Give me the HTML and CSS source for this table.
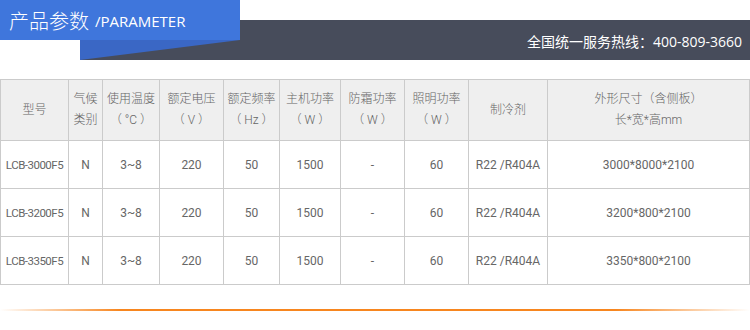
FILE: index.html
```html
<!DOCTYPE html>
<html lang="zh">
<head>
<meta charset="utf-8">
<title>产品参数</title>
<link rel="stylesheet" href="styles.css">
</head>
<body>
<div class="page">
  <header class="head">
    <div class="title"><span class="title-cn">产品参数</span><span class="title-en">/PARAMETER</span></div>
    <div class="bar"><span class="hotline">全国统一服务热线：400-809-3660</span></div>
  </header>
  <table class="params">
    <colgroup>
      <col style="width:68px"><col style="width:34px"><col style="width:57px"><col style="width:64px"><col style="width:56px"><col style="width:61px"><col style="width:64px"><col style="width:64px"><col style="width:79px"><col>
    </colgroup>
    <thead>
      <tr>
        <th>型号</th>
        <th>气候<br>类别</th>
        <th>使用温度<br>（ °C ）</th>
        <th>额定电压<br>（ V ）</th>
        <th>额定频率<br>（ Hz ）</th>
        <th>主机功率<br>（ W ）</th>
        <th>防霜功率<br>（ W ）</th>
        <th>照明功率<br>（ W ）</th>
        <th>制冷剂</th>
        <th>外形尺寸（含侧板）<br>长*宽*高mm</th>
      </tr>
    </thead>
    <tbody>
      <tr><td class="model">LCB-3000F5</td><td>N</td><td>3~8</td><td>220</td><td>50</td><td>1500</td><td>-</td><td>60</td><td>R22 /R404A</td><td>3000*8000*2100</td></tr>
      <tr><td class="model">LCB-3200F5</td><td>N</td><td>3~8</td><td>220</td><td>50</td><td>1500</td><td>-</td><td>60</td><td>R22 /R404A</td><td>3200*800*2100</td></tr>
      <tr><td class="model">LCB-3350F5</td><td>N</td><td>3~8</td><td>220</td><td>50</td><td>1500</td><td>-</td><td>60</td><td>R22 /R404A</td><td>3350*800*2100</td></tr>
    </tbody>
  </table>
  <div class="rule"></div>
</div>
</body>
</html>
```
FILE: styles.css
```css
html, body {
  margin: 0;
  padding: 0;
  background: #fff;
}
body {
  font-family: Roboto, "Noto Sans CJK SC", sans-serif;
  color: #666;
  text-spacing-trim: space-all;
}
.page {
  width: 750px;
}
.head {
  position: relative;
  height: 79px;
  padding-top: 20px;
  box-sizing: border-box;
}
.title {
  position: absolute;
  left: 0;
  top: 0;
  z-index: 2;
  width: 240px;
  height: 40px;
  background: #3f76dc;
  color: #fff;
  display: flex;
  align-items: center;
  padding-left: 9px;
  box-sizing: border-box;
  white-space: nowrap;
}
.title-cn {
  font-family: "Noto Sans CJK SC", sans-serif;
  font-size: 20px;
  font-weight: 300;
  margin-right: 6px;
}
.title-en {
  font-family: "Open Sans", "Noto Sans CJK SC", sans-serif;
  font-size: 15px;
  padding-top: 2px;
}
.bar {
  position: relative;
  margin-left: 80px;
  height: 40px;
  background: #474c5b;
  display: flex;
  align-items: center;
  justify-content: flex-end;
  padding-right: 8px;
}
.bar::before {
  content: "";
  position: absolute;
  left: 0;
  top: 20px;
  width: 160px;
  height: 20px;
  background: #3a67c5;
  clip-path: polygon(0 0, 100% 0, 0 100%);
}
.hotline {
  color: #fff;
  font-family: "Open Sans", "Noto Sans CJK SC", sans-serif;
  font-size: 14px;
  padding-top: 1px;
}
.params {
  width: 750px;
  border-collapse: collapse;
  table-layout: fixed;
  font-family: Roboto, "Noto Sans CJK SC", sans-serif;
  font-size: 12px;
  color: #666;
}
.params th, .params td {
  border: 1px solid #cbcbcb;
  text-align: center;
  vertical-align: middle;
  padding: 0;
  font-weight: normal;
  white-space: nowrap;
}
.params th {
  background: #efefef;
  height: 60px;
  line-height: 21px;
  font-weight: 300;
}
.params td {
  height: 47px;
  line-height: 16px;
}
.params td.model {
  letter-spacing: -0.5px;
  font-size: 11.5px;
}
.rule {
  margin-top: 24px;
  height: 2px;
  background: linear-gradient(to right, rgba(247, 133, 31, 0) 0%, #f7861f 16%, #f7861f 82%, rgba(247, 133, 31, 0) 100%);
}
```
